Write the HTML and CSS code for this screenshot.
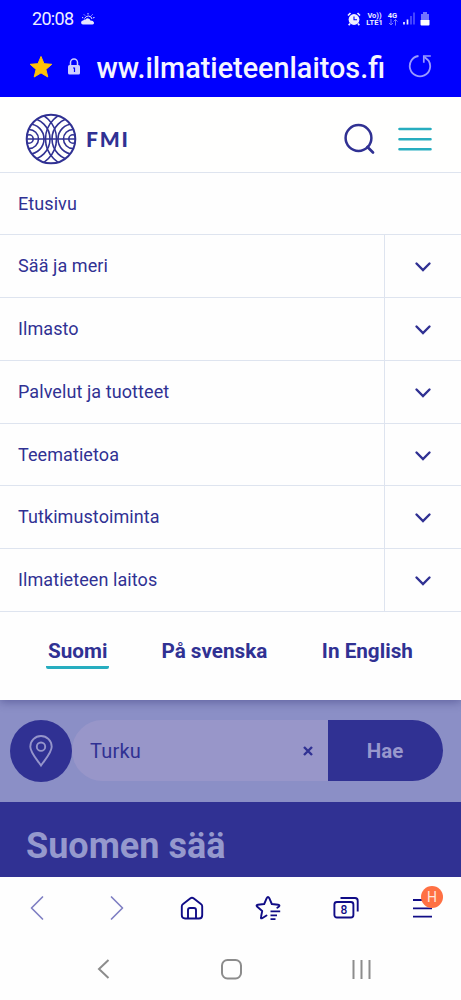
FILE: index.html
```html
<!DOCTYPE html>
<html lang="fi">
<head>
<meta charset="utf-8">
<title>Ilmatieteen laitos</title>
<link rel="stylesheet" href="styles.css">
</head>
<body>
<div class="phone">
  <div class="browser-top">
    <div class="status">
      <span class="clock">20:08</span>
      <svg class="weather" width="14" height="12" viewBox="0 0 14 12"><path d="M2 11.500a2 2 0 0 1 .2-4q.8-1.500 2.400-1Q6 4.500 8 5.800q1.300.5 1.300 1.700 3-.2 3.700 2 .3 2-1.500 2z" fill="#e6e6ff"/><path d="M3.500 5.500Q5 2.800 7.500 3q3 .2 3.500 3M7 0v1.500M3 1.500l1 1M11.500 1.500l-1 1M1 4.500l1.300.4M13.500 4.500l-1.500.4" fill="none" stroke="#e6e6ff" stroke-width="1"/></svg>
      <svg class="alarm" width="14" height="14" viewBox="0 0 14 14"><circle cx="7" cy="7.500" r="5.400" fill="#eeeeff"/><path d="M1 3.500 3.500 1M13 3.500 10.500 1M3 11.500l-1.300 1.700M11 11.500l1.300 1.700" stroke="#eeeeff" stroke-width="1.700"/><path d="M7 4.500v3.300h3" fill="none" stroke="#00f" stroke-width="1.100"/></svg>
      <span class="lte"><span>Vo))</span><span>LTE1</span></span>
      <span class="net"><span>4G</span><svg width="10" height="7" viewBox="0 0 10 7"><path d="M3 0v6M1 4l2 2 2-2M7.500 6.500v-6M5.500 2.500l2-2 2 2" fill="none" stroke="#7777ff" stroke-width="1"/></svg></span>
      <svg class="signal" width="12" height="13" viewBox="0 0 12 13"><path d="M1 10v2.500M4.500 7.500v5" stroke="#eeeeff" stroke-width="1.700"/><path d="M8 4v8.500M11 .5v12" stroke="#7070ff" stroke-width="1.200"/></svg>
      <svg class="battery" width="10" height="14" viewBox="0 0 10 14"><path d="M3 0h4v2h2v6H1V2h2z" fill="#7272ff"/><path d="M.5 8h9v4.500q0 1-1 1h-7q-1 0-1-1z" fill="#fff"/></svg>
    </div>
    <div class="address">
      <svg class="fav" width="24" height="24" viewBox="0 0 24 24"><path d="m12 1.500 3 7.200 7.800.6-5.900 5.100 1.900 7.600-6.800-4.100L5.200 22l1.900-7.600-5.900-5.100 7.800-.6z" fill="#ffc107" stroke="#ffc107" stroke-width="1" stroke-linejoin="round"/></svg>
      <svg class="lock" width="14" height="17" viewBox="0 0 14 17"><path d="M3.500 8V4.500a3.500 3.500 0 0 1 7 0V8" fill="none" stroke="#ceceff" stroke-width="1.500"/><rect x="1" y="7" width="12" height="9.500" rx="1.500" fill="#ceceff"/><path d="M6 10h1.500v4" fill="none" stroke="#00f" stroke-width="1.200"/></svg>
      <div class="url"><span>ww.ilmatieteenlaitos.fi</span></div>
      <svg class="reload" width="24" height="24" viewBox="0 0 24 24"><path d="M10.500 2A10.200 10.200 0 1 0 20.500 6.500L16.500 3" fill="none" stroke="#9999ff" stroke-width="1.800"/><path d="M22.800 2h-7v6.800" fill="none" stroke="#9999ff" stroke-width="1.700"/></svg>
    </div>
  </div>

  <header class="site-header">
    <svg class="logo" width="52" height="52" viewBox="0 0 52 52">
      <defs><clipPath id="disc"><circle cx="26" cy="26" r="24"/></clipPath></defs>
      <g fill="none" stroke="#303193" stroke-width="1.600">
        <g clip-path="url(#disc)">
          <path d="M1 26h50"/>
          <circle cx="4" cy="26" r="4.200"/><circle cx="4" cy="26" r="9.500"/><circle cx="4" cy="26" r="15"/><circle cx="4" cy="26" r="21"/><circle cx="4" cy="26" r="27.500"/>
          <circle cx="48" cy="26" r="4.200"/><circle cx="48" cy="26" r="9.500"/><circle cx="48" cy="26" r="15"/><circle cx="48" cy="26" r="21"/><circle cx="48" cy="26" r="27.500"/>
        </g>
        <circle cx="26" cy="26" r="24.300" stroke-width="2"/>
      </g>
    </svg>
    <span class="brand">FMI</span>
    <svg class="search" width="32" height="34" viewBox="0 0 32 34"><circle cx="14.500" cy="16" r="12.900" fill="none" stroke="#303193" stroke-width="2.500"/><path d="m23.500 25 5.500 5.500" stroke="#303193" stroke-width="2.700" stroke-linecap="round"/></svg>
    <svg class="burger" width="34" height="26" viewBox="0 0 34 26"><path d="M1.500 3h31M1.500 13.200h31M1.500 23.300h31" stroke="#27adbf" stroke-width="2.600" stroke-linecap="round"/></svg>
  </header>

  <nav class="menu">
    <div class="row"><a>Etusivu</a></div>
    <div class="row"><a>Sää ja meri</a><span class="toggle"><svg width="18" height="12" viewBox="0 0 18 12"><path d="m2.500 2.500 6.500 6.500 6.500-6.500"/></svg></span></div>
    <div class="row"><a>Ilmasto</a><span class="toggle"><svg width="18" height="12" viewBox="0 0 18 12"><path d="m2.500 2.500 6.500 6.500 6.500-6.500"/></svg></span></div>
    <div class="row"><a>Palvelut ja tuotteet</a><span class="toggle"><svg width="18" height="12" viewBox="0 0 18 12"><path d="m2.500 2.500 6.500 6.500 6.500-6.500"/></svg></span></div>
    <div class="row"><a>Teematietoa</a><span class="toggle"><svg width="18" height="12" viewBox="0 0 18 12"><path d="m2.500 2.500 6.500 6.500 6.500-6.500"/></svg></span></div>
    <div class="row"><a>Tutkimustoiminta</a><span class="toggle"><svg width="18" height="12" viewBox="0 0 18 12"><path d="m2.500 2.500 6.500 6.500 6.500-6.500"/></svg></span></div>
    <div class="row"><a>Ilmatieteen laitos</a><span class="toggle"><svg width="18" height="12" viewBox="0 0 18 12"><path d="m2.500 2.500 6.500 6.500 6.500-6.500"/></svg></span></div>
    <div class="languages">
      <a class="lang active">Suomi</a><a class="lang">På svenska</a><a class="lang">In English</a>
    </div>
  </nav>

  <section class="search-area">
    <span class="locate"><svg width="26" height="34" viewBox="0 0 26 34"><path d="M13 31.500C9 25.500 2.300 18.500 2.300 12.700a10.700 10.700 0 0 1 21.400 0C23.700 18.500 17 25.500 13 31.500z" fill="none" stroke="#9595cb" stroke-width="1.900"/><circle cx="13" cy="12.700" r="4.200" fill="none" stroke="#9595cb" stroke-width="1.900"/></svg></span>
    <div class="field"><span>Turku</span><svg width="10" height="10" viewBox="0 0 10 10"><path d="m1 1 8 8m0-8-8 8" stroke="#303193" stroke-width="2.400"/></svg></div>
    <span class="submit">Hae</span>
  </section>
  <section class="hero"><h1>Suomen sää</h1></section>

  <div class="toolbar">
    <svg width="14" height="26" viewBox="0 0 14 26"><path d="M12.500 2 1.500 13l11 11" fill="none" stroke="#8080c4" stroke-width="1.700" stroke-linecap="round" stroke-linejoin="round"/></svg>
    <svg width="14" height="26" viewBox="0 0 14 26"><path d="m1.500 2 11 11-11 11" fill="none" stroke="#8080c4" stroke-width="1.700" stroke-linecap="round" stroke-linejoin="round"/></svg>
    <svg width="24" height="24" viewBox="0 0 24 24"><path d="M1.800 10.500q0-1.500 1-2.200l7.700-6q1.500-1.200 3 0l7.700 6q1 .7 1 2.200v8.700q0 3.300-3.300 3.300H5.100q-3.300 0-3.300-3.300zM8 22.500V14q0-2 2-2h4q2 0 2 2v8.500" fill="none" stroke="#100c86" stroke-width="1.900" stroke-linejoin="round"/></svg>
    <svg width="26" height="26" viewBox="0 0 26 26"><path d="M11.500 20.500 7.500 23q-2 1.200-1.500-1l1.200-6L2 11.500Q.8 10 2.800 9.700L9.200 9l2.500-5.800q1.300-2.400 2.600 0L16.800 9l6.400.7q2 .3.800 1.800l-1.700 1.200" fill="none" stroke="#100c86" stroke-width="1.900" stroke-linecap="round" stroke-linejoin="round"/><path d="M15.500 16.400h9.700M15.500 20.300h6.500M15.500 24.100h5" stroke="#100c86" stroke-width="1.800"/></svg>
    <span class="tabs"><svg width="26" height="24" viewBox="0 0 26 24"><rect x="1.400" y="6" width="19" height="15.500" rx="2.500" fill="none" stroke="#100c86" stroke-width="1.900"/><path d="M7.500 2H22q2.700 0 2.700 2.700v10.800" fill="none" stroke="#100c86" stroke-width="1.900"/></svg><b>8</b></span>
    <span class="more"><svg width="21" height="20" viewBox="0 0 21 20"><path d="M1 2h19M1 10.300h19M1 18.600h19" stroke="#100c86" stroke-width="1.800"/></svg><b>H</b></span>
  </div>
  <div class="android-nav">
    <svg width="13" height="20" viewBox="0 0 13 20"><path d="M11.500 1 2 10l9.500 9" fill="none" stroke="#8c8c8c" stroke-width="2"/></svg>
    <svg width="21" height="21" viewBox="0 0 21 21"><rect x="1" y="1" width="19" height="18.500" rx="5.500" fill="none" stroke="#8c8c8c" stroke-width="2"/></svg>
    <svg width="19" height="19" viewBox="0 0 19 19"><path d="M1.500 0v19M9.500 0v19M17.500 0v19" stroke="#8c8c8c" stroke-width="2"/></svg>
  </div>
</div>
</body>
</html>
```
FILE: styles.css
```css
* { box-sizing: border-box; }
body { margin: 0; background: #fefefe; font-family: Roboto, sans-serif; color: #303193; }
svg { display: block; flex: none; }
.phone { width: 461px; height: 1000px; display: flex; flex-direction: column; overflow: hidden; }

.browser-top { height: 97px; background: #0000fe; flex: none; }
.status { height: 37px; display: flex; align-items: center; padding: 0 31px 0 32px; color: #eeeeff; }
.clock { font-size: 18px; width: 42px; letter-spacing: -.7px; white-space: nowrap; }
.weather { margin-left: 7px; }
.alarm { margin-left: auto; margin-right: 5px; }
.lte, .net { display: flex; flex-direction: column; font-size: 7.500px; line-height: 7px; font-weight: 700; align-items: center; }
.lte { width: 17px; margin-right: 4px; }
.net { width: 11px; margin-right: 5px; }
.signal { margin-right: 5px; }
.address { height: 60px; display: flex; align-items: center; padding: 0 29px; }
.fav { margin-top: -1px; }
.lock { margin: -1px 16px 0 14px; }
.url { width: 288px; display: flex; justify-content: flex-end; color: #f5f5ff; font-size: 28.800px; line-height: 40px; font-weight: 500; margin-top: 1px; white-space: nowrap; }
.reload { margin-left: 23px; margin-top: -2px; }

.site-header { height: 74.500px; flex: none; display: flex; align-items: center; padding: 10px 29px 0 25px; background: #fffffe; position: relative; z-index: 1; }
.brand { font-family: Lato, sans-serif; font-weight: 900; font-size: 21px; letter-spacing: 1.800px; margin: -2px 0 0 9px; }
.search { margin-left: auto; margin-right: 22px; }

.menu { flex: none; height: 528px; background: #fefefe; box-shadow: 0 2px 9px rgba(30, 30, 100, .4); position: relative; }
.row { height: 62.800px; display: flex; border-top: 1.500px solid #dee4ef; }
.row a { flex: 1; padding-left: 18px; font-size: 18px; line-height: 61px; letter-spacing: .08px; }
.toggle { width: 77px; border-left: 1.500px solid #dee4ef; display: flex; align-items: center; justify-content: center; padding-top: 2px; }
.toggle path { fill: none; stroke: #303193; stroke-width: 2.400; stroke-linecap: round; }
.languages { border-top: 1.500px solid #dee4ef; display: flex; padding: 23.500px 0 0 46px; font-size: 20.700px; line-height: 30px; font-weight: 700; }
.lang { white-space: nowrap; padding: 0 2px; height: 33px; }
.lang:nth-child(2) { margin-left: 50px; }
.lang:nth-child(3) { margin-left: 50.500px; }
.active { border-bottom: 3px solid #27adbf; border-radius: 2px; }

.search-area { height: 102.500px; flex: none; display: flex; padding: 20.500px 18px 21px 10px; background: #8b8fc6; }
.locate { width: 62px; height: 62px; border-radius: 50%; background: #303193; display: flex; align-items: center; justify-content: center; }
.field { flex: 1; height: 61px; border-radius: 31px 0 0 31px; background: #9896c9; display: flex; align-items: center; justify-content: space-between; padding: 0 15px 0 18px; font-size: 20px; letter-spacing: .2px; }
.submit { width: 115px; height: 61px; border-radius: 0 31px 31px 0; background: #303193; color: #9898cc; font-size: 20.500px; line-height: 62px; font-weight: 700; text-align: center; padding-right: 1px; }
.hero { height: 75px; flex: none; background: #303193; padding: 23px 26px; }
.hero h1 { margin: 0; font-size: 36px; line-height: 43px; font-weight: 700; color: #9599cd; }

.toolbar { height: 61px; flex: none; display: flex; align-items: center; padding: 0 18px 0 30px; background: #fefefe; }
.toolbar svg:nth-child(2) { margin-left: 66px; }
.toolbar svg:nth-child(3) { margin-left: 56px; }
.toolbar svg:nth-child(4) { margin-left: 51px; }
.tabs { position: relative; margin-left: 52px; }
.tabs b { position: absolute; left: 1px; top: 6px; width: 20px; text-align: center; font-size: 12px; line-height: 16px; color: #100c86; font-weight: 500; }
.more { position: relative; margin-left: 53px; }
.more b { position: absolute; left: 9px; top: -12px; width: 22px; height: 22px; border-radius: 50%; background: #ff7043; color: #ffe7dd; font-size: 14px; line-height: 22px; font-weight: 400; text-align: center; }
.android-nav { height: 62px; flex: none; display: flex; align-items: center; padding: 0 90px 0 97px; justify-content: space-between; }
```
